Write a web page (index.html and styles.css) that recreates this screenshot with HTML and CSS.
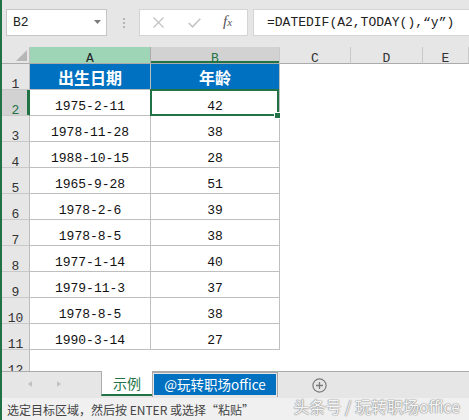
FILE: index.html
```html
<!DOCTYPE html>
<html lang="zh">
<head>
<meta charset="utf-8">
<link rel="stylesheet" href="styles.css">
</head>
<body>
<div class="app">
  <div class="fbar">
    <div class="namebox">
      <span>B2</span>
      <svg class="dd" width="7" height="4" viewBox="0 0 7 4"><polygon points="0,0 7,0 3.5,4" fill="#7a7a7a"/></svg>
    </div>
    <div class="dots"><i></i><i></i><i></i></div>
    <div class="fxbtns">
      <svg class="xbtn" width="11" height="11" viewBox="0 0 11 11"><path d="M0.5 0.5 L10.5 10.5 M10.5 0.5 L0.5 10.5" stroke="#c4c4c4" stroke-width="1.4" fill="none"/></svg>
      <svg class="okbtn" width="13" height="10" viewBox="0 0 13 10"><path d="M0.7 5 L4.5 8.8 L12.3 0.8" stroke="#c4c4c4" stroke-width="1.6" fill="none"/></svg>
      <span class="fx"><i>f</i><i class="fxx">x</i></span>
    </div>
    <div class="formula">=DATEDIF(A2,TODAY(),“y”)</div>
  </div>

  <div class="sheet">
    <div class="blank"></div>
    <div class="ch corner"><svg width="11" height="11" viewBox="0 0 11 11"><polygon points="11,0 11,11 0,11" fill="#b7b7b7"/></svg></div>
    <div class="ch cha">A</div>
    <div class="ch chb">B</div>
    <div class="ch">C</div>
    <div class="ch">D</div>
    <div class="ch">E</div>

    <div class="rh">1</div>
    <div class="hd">出生日期</div>
    <div class="hd">年龄</div>

    <div class="rh rhsel">2</div>
    <div class="c">1975-2-11</div>
    <div class="c sel">42<span class="handle"></span></div>

    <div class="rh">3</div>
    <div class="c">1978-11-28</div>
    <div class="c">38</div>

    <div class="rh">4</div>
    <div class="c">1988-10-15</div>
    <div class="c">28</div>

    <div class="rh">5</div>
    <div class="c">1965-9-28</div>
    <div class="c">51</div>

    <div class="rh">6</div>
    <div class="c">1978-2-6</div>
    <div class="c">39</div>

    <div class="rh">7</div>
    <div class="c">1978-8-5</div>
    <div class="c">38</div>

    <div class="rh">8</div>
    <div class="c">1977-1-14</div>
    <div class="c">40</div>

    <div class="rh">9</div>
    <div class="c">1979-11-3</div>
    <div class="c">37</div>

    <div class="rh">10</div>
    <div class="c">1978-8-5</div>
    <div class="c">38</div>

    <div class="rh">11</div>
    <div class="c">1990-3-14</div>
    <div class="c">27</div>

    <div class="rh last">12</div>
    <div class="e"></div>
    <div class="e"></div>
  </div>

  <div class="tabbar">
    <svg class="nav" width="99" height="25" viewBox="0 0 99 25"><polygon points="30,9 26,12 30,15" fill="#c2c2c2"/><polygon points="55,9 59,12 55,15" fill="#c2c2c2"/></svg>
    <div class="tab active">示例</div>
    <div class="tabwrap"><div class="tab blue">@玩转职场office</div></div>
    <svg class="add" width="15" height="15" viewBox="0 0 15 15"><circle cx="7.5" cy="7.5" r="6.6" stroke="#7a7a7a" stroke-width="1.2" fill="none"/><path d="M7.5 4 V11 M4 7.5 H11" stroke="#7a7a7a" stroke-width="1.3"/></svg>
  </div>

  <div class="status">选定目标区域，然后按 ENTER 或选择“粘贴”</div>

  <div class="watermark">头条号 / 玩转职场office</div>
</div>
</body>
</html>
```

FILE: styles.css
```css
html, body {
  margin: 0;
  padding: 0;
}
body {
  width: 469px;
  height: 420px;
  overflow: hidden;
  background: #e6e6e6;
  font-family: "Noto Sans CJK SC", "Liberation Sans", sans-serif;
}
.app {
  position: relative;
  height: 420px;
  border-left: 2px solid #217346;
  display: flex;
  flex-direction: column;
  box-sizing: border-box;
  overflow: hidden;
}

/* formula bar */
.fbar {
  height: 47px;
  flex: none;
  box-sizing: border-box;
  padding: 9px 0 0 4px;
  display: flex;
  align-items: flex-start;
  background: #e6e6e6;
}
.namebox {
  width: 101px;
  height: 27px;
  box-sizing: border-box;
  border: 1px solid #c6c6c6;
  background: #fff;
  display: flex;
  align-items: center;
  justify-content: space-between;
  padding: 0 5px 0 6px;
  font: 13px "Liberation Mono", monospace;
  color: #222;
}
.dd { margin-top: -1px; }
.dots {
  margin: 9px 0 0 15px;
  width: 3px;
  display: flex;
  flex-direction: column;
  align-items: center;
  gap: 2px;
}
.dots i {
  display: block;
  width: 2px;
  height: 2px;
  background: #b5b5b5;
}
.fxbtns {
  margin-left: 14px;
  width: 109px;
  height: 27px;
  box-sizing: border-box;
  border: 1px solid #d4d4d4;
  background: #fff;
  display: flex;
  align-items: center;
  padding-left: 13px;
}
.okbtn { margin-left: 24px; }
.fx {
  margin-left: 22px;
  font-family: "Liberation Serif", serif;
  color: #555;
  display: flex;
  align-items: baseline;
  margin-top: -2px;
}
.fx i { font-size: 15px; }
.fx .fxx { font-size: 11px; margin-left: 0; }
.formula {
  margin-left: 5px;
  flex: 1;
  height: 27px;
  box-sizing: border-box;
  border: 1px solid #d4d4d4;
  border-right: none;
  background: #fff;
  padding-left: 13px;
  font: 13px/25px "Liberation Mono", monospace;
  color: #222;
  white-space: nowrap;
}

/* sheet */
.sheet {
  flex: none;
  height: 324px;
  display: grid;
  grid-template-columns: 28px 121px 129px 71px 72px 1fr;
  grid-template-rows: 17px repeat(11, 26px) 21px;
  background: #fff;
  overflow: hidden;
  font: 13px/13px "Liberation Mono", monospace;
}
.blank {
  grid-column: 4 / 7;
  grid-row: 2 / 14;
  background: #fff;
}
.ch {
  box-sizing: border-box;
  background: #e6e6e6;
  border-right: 1px solid #c9c9c9;
  border-bottom: 1px solid #ababab;
  text-align: center;
  padding-top: 5px;
  color: #333;
}
.corner {
  position: relative;
  border-right: 1px solid #c0c0c0;
  padding: 0;
  display: flex;
  align-items: flex-end;
  justify-content: flex-end;
  padding: 0 2px 2px 0;
}
.cha {
  background: #9fd5b7;
  border-right-color: #ababab;
  color: #222;
}
.chb {
  background: #d2d2d2;
  color: #217346;
  box-shadow: inset 0 -2px #217346;
}
.rh {
  box-sizing: border-box;
  background: #e6e6e6;
  border-right: 1px solid #bdbdbd;
  border-bottom: 1px solid #c9c9c9;
  text-align: center;
  padding-top: 14px;
  color: #333;
}
.rhsel {
  background: #d2d2d2;
  color: #217346;
  box-shadow: inset -2px 0 #217346;
  border-right-color: #217346;
}
.rh.last { border-bottom: none; }
.hd {
  box-sizing: border-box;
  background: #0070c0;
  color: #fff;
  border-right: 1px solid #bfbfbf;
  border-bottom: 1px solid #bfbfbf;
  font: bold 16px/16px "Noto Sans CJK SC", sans-serif;
  display: flex;
  align-items: center;
  justify-content: center;
  padding-top: 1px;
}
.c {
  box-sizing: border-box;
  border-right: 1px solid #bfbfbf;
  border-bottom: 1px solid #bfbfbf;
  text-align: center;
  padding-top: 10px;
  color: #111;
  background: #fff;
}
.e { background: #fff; }
.sel { position: relative; }
.sel::after {
  content: "";
  position: absolute;
  left: -1px;
  top: -1px;
  right: 0;
  bottom: -1px;
  border: 2px solid #217346;
}
.handle {
  position: absolute;
  right: -1px;
  bottom: -3px;
  width: 5px;
  height: 5px;
  background: #217346;
  box-shadow: 0 0 0 1px #fff;
  z-index: 2;
}

/* tabs */
.tabbar {
  flex: none;
  height: 27px;
  box-sizing: border-box;
  border-top: 1px solid #ababab;
  background: #e6e6e6;
  display: flex;
  align-items: flex-start;
}
.nav { flex: none; }
.tab {
  box-sizing: border-box;
  font-size: 14px;
  display: flex;
  align-items: center;
  justify-content: center;
  white-space: nowrap;
}
.active {
  width: 51px;
  height: 25px;
  margin-top: -1px;
  background: #fff;
  color: #217346;
  border-left: 1px solid #ababab;
  border-bottom: 2px solid #217346;
}
.tabwrap {
  width: 126px;
  height: 25px;
  box-sizing: border-box;
  border: 1px solid #a8a8a8;
  border-bottom: none;
  padding: 1px 1px 2px 1px;
}
.blue {
  height: 100%;
  background: #0070c0;
  color: #fff;
  font-size: 13.5px;
  padding-bottom: 1px;
}
.add {
  margin: 6px 0 0 34px;
}

/* status */
.status {
  flex: 1;
  background: #f0f0f0;
  font-size: 12px;
  color: #444;
  display: flex;
  align-items: center;
  padding-left: 5px;
  white-space: nowrap;
}
.watermark {
  position: absolute;
  right: 9px;
  top: 396px;
  font-size: 16px;
  line-height: 20px;
  color: rgba(255, 255, 255, 0.92);
  text-shadow: 0 0 1px #8a8a8a, 0 0 1px #8a8a8a, 0 0 2px #b0b0b0;
  white-space: nowrap;
}
```
